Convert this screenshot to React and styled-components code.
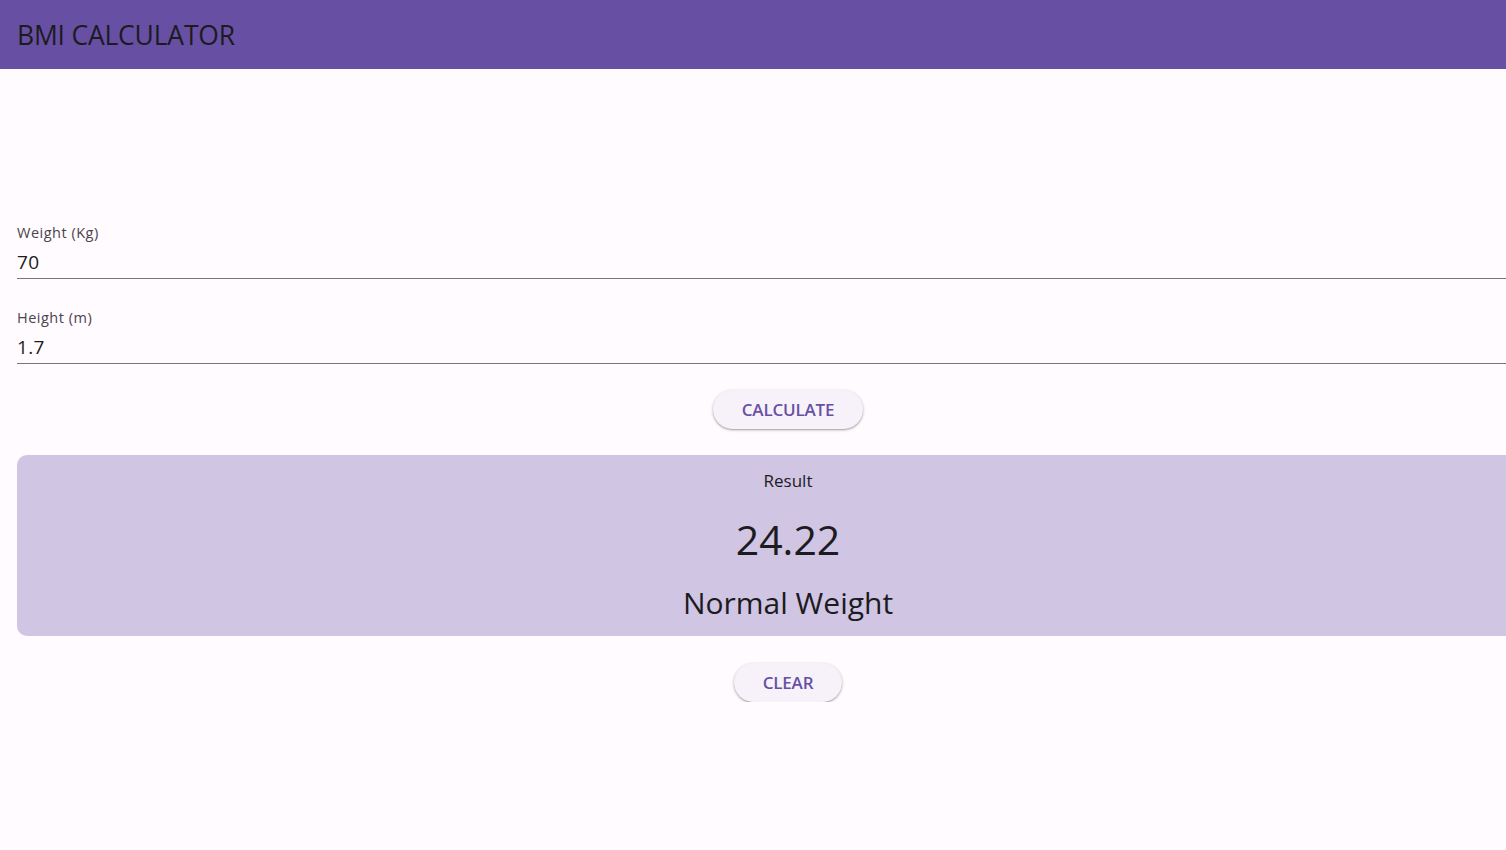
import React, { useState } from 'react';
import styled, { createGlobalStyle } from 'styled-components';

const GlobalStyle = createGlobalStyle`
  html, body {
    margin: 0;
    padding: 0;
    background: #fffbfe;
    overflow: hidden;
  }
  body {
    font-family: "Open Sans", "Noto Sans", sans-serif;
    color: #1c1b1f;
  }
`;

const AppBar = styled.header`
  height: 69px;
  background: #6750a4;
  display: flex;
  align-items: center;
  padding-left: 17px;
`;

const Title = styled.h1`
  margin: 0;
  font-size: 26.5px;
  font-weight: 400;
  color: #1c1b1f;
  letter-spacing: -0.2px;
`;

const Body = styled.main`
  width: 1542px;
  margin-left: 17px;
  padding-top: 154px;
  display: flex;
  flex-direction: column;
`;

const Field = styled.label`
  display: flex;
  flex-direction: column;
  border-bottom: 1px solid #79747e;
  margin-bottom: ${p => p.$gap || 0}px;
`;

const FieldLabel = styled.span`
  font-size: 14.5px;
  letter-spacing: 0.5px;
  color: #49454f;
  line-height: 20px;
`;

const Input = styled.input`
  box-sizing: border-box;
  border: none;
  background: transparent;
  outline: none;
  font-family: inherit;
  font-size: 19px;
  letter-spacing: 0.3px;
  color: #1c1b1f;
  padding: 2px 0 0;
  height: 35px;
`;

const Button = styled.button`
  align-self: center;
  height: 39px;
  padding: 0 29px;
  border: none;
  border-radius: 20px;
  background: #f7f2fa;
  color: #6750a4;
  font-family: inherit;
  font-size: 17px;
  font-weight: 600;
  letter-spacing: -0.2px;
  box-shadow: 0 1px 3px rgba(0, 0, 0, 0.3), 0 1px 1px rgba(0, 0, 0, 0.12);
  cursor: pointer;
`;

const Card = styled.section`
  margin: 26px 0 27px;
  height: 181px;
  border-radius: 10px;
  background: #d0c5e3;
  display: flex;
  flex-direction: column;
  align-items: center;
  padding-top: 14px;
  box-sizing: border-box;
`;

const CardLabel = styled.div`
  font-size: 17px;
  line-height: 24px;
`;

const Score = styled.div`
  font-size: 41px;
  line-height: 50px;
  margin-top: 21px;
`;

const Category = styled.div`
  font-size: 30px;
  line-height: 40px;
  margin-top: 19px;
`;

function bmiCategory(v) {
  if (v < 18.5) return 'Underweight';
  if (v < 25) return 'Normal Weight';
  if (v < 30) return 'Overweight';
  return 'Obese';
}

export default function App() {
  const [weight, setWeight] = useState('70');
  const [height, setHeight] = useState('1.7');
  const [result, setResult] = useState(70 / (1.7 * 1.7));

  const calculate = () => {
    const w = parseFloat(weight);
    const h = parseFloat(height);
    if (w > 0 && h > 0) setResult(w / (h * h));
  };

  const clear = () => {
    setWeight('');
    setHeight('');
    setResult(null);
  };

  return (
    <>
      <GlobalStyle />
      <AppBar>
        <Title>BMI CALCULATOR</Title>
      </AppBar>
      <Body>
        <Field $gap={29}>
          <FieldLabel>Weight (Kg)</FieldLabel>
          <Input value={weight} onChange={e => setWeight(e.target.value)} />
        </Field>
        <Field $gap={26}>
          <FieldLabel>Height (m)</FieldLabel>
          <Input value={height} onChange={e => setHeight(e.target.value)} />
        </Field>
        <Button onClick={calculate}>CALCULATE</Button>
        <Card>
          <CardLabel>Result</CardLabel>
          <Score>{result ? result.toFixed(2) : '--'}</Score>
          <Category>{result ? bmiCategory(result) : ''}</Category>
        </Card>
        <Button onClick={clear}>CLEAR</Button>
      </Body>
    </>
  );
}
